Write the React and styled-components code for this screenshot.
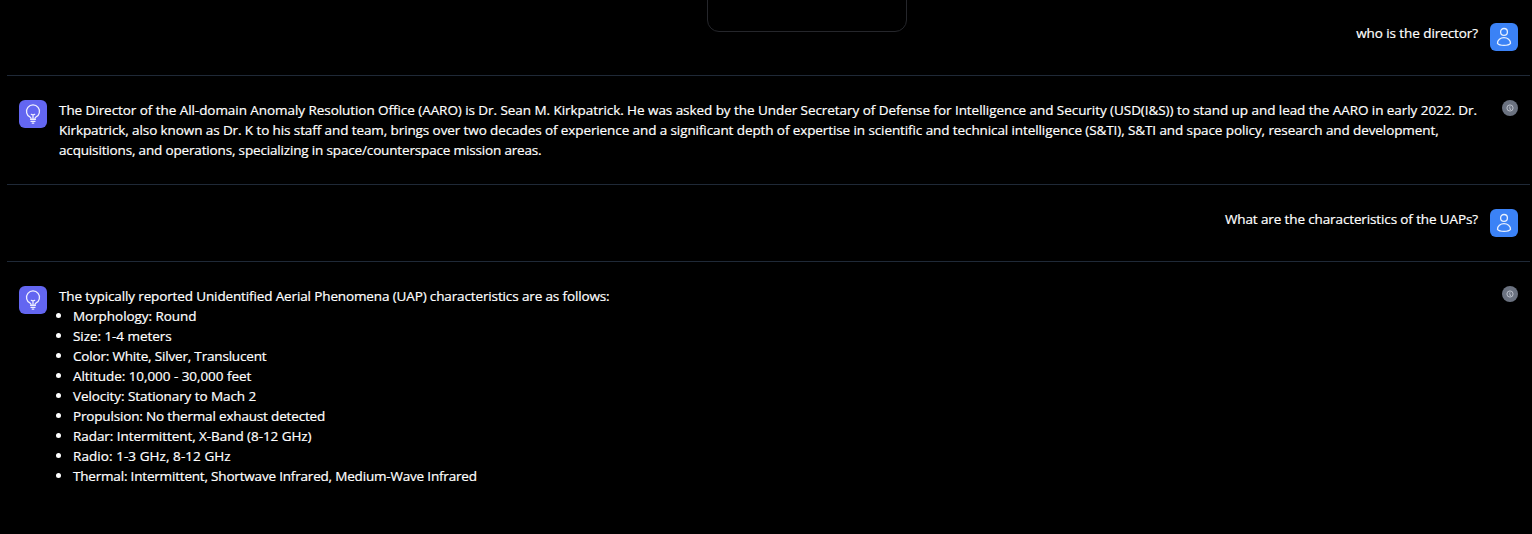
import React from "react";
import styled, { createGlobalStyle } from "styled-components";

const GlobalStyle = createGlobalStyle`
  *, *::before, *::after { box-sizing: border-box; }
  html, body { margin: 0; background: #000; }
  body { overflow: hidden; }
`;

const Page = styled.main`
  position: relative;
  height: 534px;
  overflow: hidden;
  padding: 0 2px 0 7px;
  background: #000;
  color: #fff;
  font-family: "Segoe UI", "Open Sans", "Noto Sans", sans-serif;
  font-size: 13.5px;
  line-height: 20px;
  -webkit-text-stroke: 0.2px #fff;
`;

const FloatingPanel = styled.div`
  position: absolute;
  top: -40px;
  left: 707px;
  width: 200px;
  height: 72px;
  border: 1px solid #25262b;
  border-radius: 12px;
`;

const Message = styled.article`
  display: flex;
  align-items: flex-start;
  justify-content: ${(p) => (p.$own ? "flex-end" : "flex-start")};
  gap: 12px;
  padding: ${(p) => (p.$first ? "23px" : "24px")} 12px 24px;
  border-bottom: ${(p) => (p.$last ? "0" : "1px solid #1f2937")};
`;

const Avatar = styled.div`
  display: flex;
  flex: none;
  align-items: center;
  justify-content: center;
  width: 28px;
  height: 28px;
  border-radius: 6px;
  background: ${(p) => (p.$own ? "#3b82f6" : "#6366f1")};
`;

const Body = styled.div`
  flex: ${(p) => (p.$own ? "none" : "1")};
  min-width: 0;
`;

const Line = styled.span`
  display: block;
  white-space: nowrap;
  letter-spacing: ${(p) => p.$tracking}px;
`;

const List = styled.ul`
  margin: 0;
  padding: 0;
  list-style: none;
`;

const Item = styled.li`
  display: flex;
  align-items: center;
  gap: 12px;
  margin-left: -3px;

  &::before {
    content: "";
    width: 5px;
    height: 5px;
    margin-bottom: 2px;
    border-radius: 50%;
    background: #fff;
  }
`;

const InfoDot = styled.div`
  display: flex;
  flex: none;
  align-items: center;
  justify-content: center;
  width: 16px;
  height: 16px;
  border-radius: 50%;
  background: #6b7280;
`;

const UserIcon = () => (
  <svg width="28" height="28" viewBox="0 0 28 28" fill="none" stroke="#e8f0fe" strokeWidth="1.3" strokeLinejoin="round">
    <circle cx="14" cy="8.9" r="3.4" />
    <path d="M7.500 20.300c0-3.300 2.900-5.700 6.500-5.700s6.500 2.400 6.500 5.700c-1 1.300-3.600 2-6.500 2s-5.500-.7-6.500-2Z" />
  </svg>
);

const BulbIcon = () => (
  <svg width="28" height="28" viewBox="0 0 28 28" fill="none" stroke="#eef" strokeWidth="1.3" strokeLinecap="round" strokeLinejoin="round">
    <path d="M12 19.200v-.8c0-.5-.3-.9-.8-1.200a6.500 6.500 0 1 1 5.600 0c-.5.3-.8.7-.8 1.200v.8" />
    <path d="M12.300 14.300 14 14.800l1.700-.5M14 14.800v4.400M11.700 19.400h4.600M12 21.300h4M13.200 23.100h1.600" />
  </svg>
);

const InfoIcon = () => (
  <svg width="8" height="8" viewBox="0 0 8 8" fill="none" stroke="#c5cad2" strokeWidth="0.9">
    <circle cx="4" cy="4" r="3.1" />
    <path d="M3.300 3.700H4v1.800h.8M4 2.100v.7" />
  </svg>
);

const Question = ({ text, tracking, first }) => (
  <Message $own $first={first}>
    <Body $own>
      <Line $tracking={tracking}>{text}</Line>
    </Body>
    <Avatar $own>
      <UserIcon />
    </Avatar>
  </Message>
);

const Answer = ({ children, last }) => (
  <Message $last={last}>
    <Avatar>
      <BulbIcon />
    </Avatar>
    <Body>{children}</Body>
    <InfoDot>
      <InfoIcon />
    </InfoDot>
  </Message>
);

const biography = [
  ["The Director of the All-domain Anomaly Resolution Office (AARO) is Dr. Sean M. Kirkpatrick. He was asked by the Under Secretary of Defense for Intelligence and Security (USD(I&S)) to stand up and lead the AARO in early 2022. Dr.", -0.059],
  ["Kirkpatrick, also known as Dr. K to his staff and team, brings over two decades of experience and a significant depth of expertise in scientific and technical intelligence (S&TI), S&TI and space policy, research and development,", -0.097],
  ["acquisitions, and operations, specializing in space/counterspace mission areas.", -0.159],
];

const traits = [
  ["Morphology: Round", -0.052],
  ["Size: 1-4 meters", -0.06],
  ["Color: White, Silver, Translucent", -0.18],
  ["Altitude: 10,000 - 30,000 feet", -0.05],
  ["Velocity: Stationary to Mach 2", -0.075],
  ["Propulsion: No thermal exhaust detected", -0.17],
  ["Radar: Intermittent, X-Band (8-12 GHz)", -0.06],
  ["Radio: 1-3 GHz, 8-12 GHz", 0.065],
  ["Thermal: Intermittent, Shortwave Infrared, Medium-Wave Infrared", -0.188],
];

export default function App() {
  return (
    <>
      <GlobalStyle />
      <Page>
        <FloatingPanel />
        <Question first text="who is the director?" tracking={-0.08} />
        <Answer>
          {biography.map(([text, tracking]) => (
            <Line key={text} $tracking={tracking}>{text}</Line>
          ))}
        </Answer>
        <Question text="What are the characteristics of the UAPs?" tracking={-0.124} />
        <Answer last>
          <Line $tracking={-0.131}>
            The typically reported Unidentified Aerial Phenomena (UAP) characteristics are as follows:
          </Line>
          <List>
            {traits.map(([text, tracking]) => (
              <Item key={text}>
                <Line $tracking={tracking}>{text}</Line>
              </Item>
            ))}
          </List>
        </Answer>
      </Page>
    </>
  );
}
